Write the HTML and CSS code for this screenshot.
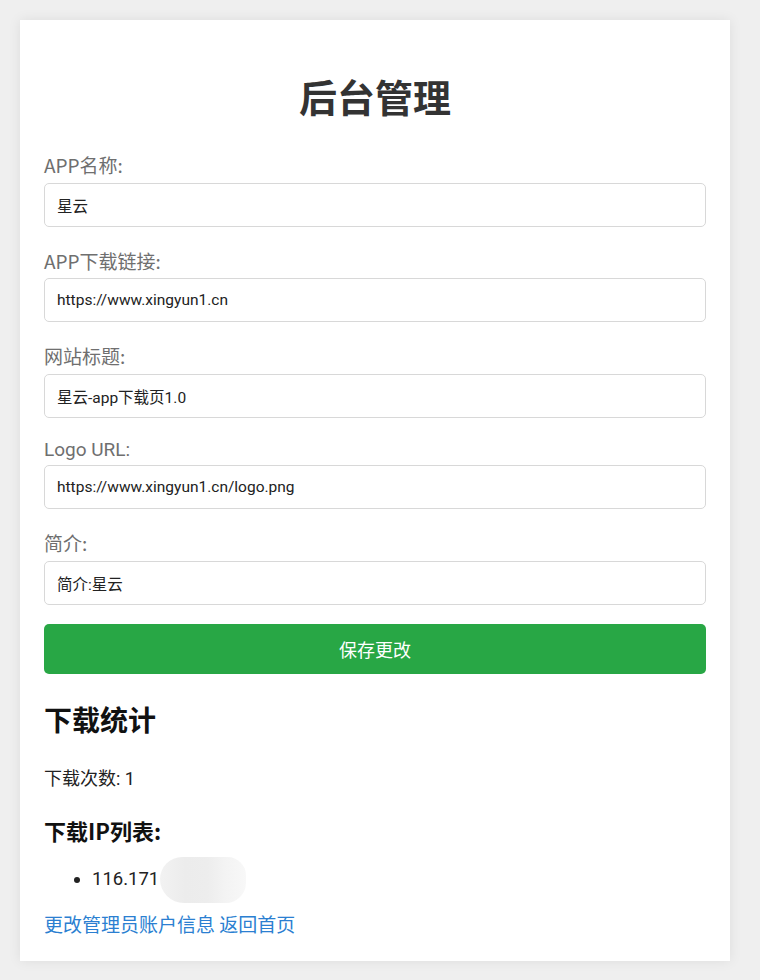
FILE: index.html
```html
<!DOCTYPE html>
<html lang="zh-CN">
<head>
<meta charset="utf-8">
<title>后台管理</title>
<link rel="stylesheet" href="styles.css">
</head>
<body>
<div class="card">
  <h1 class="title">后台管理</h1>
  <form class="form">
    <div class="group">
      <label class="label">APP名称:</label>
      <input class="input" type="text" value="星云">
    </div>
    <div class="group">
      <label class="label">APP下载链接:</label>
      <input class="input" type="text" value="https://www.xingyun1.cn">
    </div>
    <div class="group">
      <label class="label">网站标题:</label>
      <input class="input" type="text" value="星云-app下载页1.0">
    </div>
    <div class="group">
      <label class="label label-latin">Logo URL:</label>
      <input class="input" type="text" value="https://www.xingyun1.cn/logo.png">
    </div>
    <div class="group">
      <label class="label">简介:</label>
      <input class="input" type="text" value="简介:星云">
    </div>
    <button class="btn" type="button">保存更改</button>
  </form>
  <h2 class="stats-title">下载统计</h2>
  <p class="count">下载次数: 1</p>
  <h3 class="ip-title">下载IP列表:</h3>
  <ul class="ip-list">
    <li>116.171<span class="redact"></span></li>
  </ul>
  <p class="links"><a href="#">更改管理员账户信息</a> <a href="#">返回首页</a></p>
</div>
</body>
</html>
```

FILE: styles.css
```css
html, body {
  margin: 0;
  padding: 0;
}
body {
  background: #efefef;
  font-family: Roboto, "Noto Sans CJK SC", sans-serif;
  color: #333;
  padding: 20px;
}
.card {
  width: 710px;
  box-sizing: border-box;
  background: #fff;
  padding: 24px 24px 24px;
  box-shadow: 0 0 12px rgba(0, 0, 0, 0.08);
}
.title {
  font-family: "Noto Sans CJK SC", sans-serif;
  font-size: 38px;
  font-weight: 700;
  color: #333;
  text-align: center;
  margin: 24px 0 28px;
}
.form {
  margin: 0;
}
.group {
  margin-bottom: 20px;
}
.group:last-of-type {
  margin-bottom: 19px;
}
.label {
  display: block;
  font-family: "Noto Sans CJK SC", sans-serif;
  font-size: 19px;
  color: #6f6f6f;
  margin-bottom: 4.5px;
}
.label-latin {
  font-family: Roboto, "Noto Sans CJK SC", sans-serif;
}
.input {
  display: block;
  width: 100%;
  height: 44px;
  box-sizing: border-box;
  border: 1px solid #d8d8d8;
  border-radius: 5px;
  padding: 0 12px;
  font-family: Roboto, "Noto Sans CJK SC", sans-serif;
  font-size: 15.5px;
  color: #222;
  background: #fff;
  outline: none;
}
.btn {
  display: block;
  width: 100%;
  height: 50px;
  border: none;
  border-radius: 5px;
  background: #28a745;
  color: #fff;
  font-family: "Noto Sans CJK SC", sans-serif;
  font-size: 18px;
  cursor: pointer;
}
.stats-title {
  font-family: "Noto Sans CJK SC", sans-serif;
  font-size: 28px;
  font-weight: 700;
  color: #111;
  margin: 25px 0 25px;
}
.count {
  font-family: Roboto, "Noto Sans CJK SC", sans-serif;
  font-size: 18px;
  color: #222;
  margin: 0 0 24px;
}
.ip-title {
  font-family: "Noto Sans CJK SC", sans-serif;
  font-size: 22px;
  font-weight: 700;
  color: #111;
  margin: 0 0 20px;
}
.ip-list {
  margin: 0 0 18px;
  padding-left: 48px;
  font-size: 18.5px;
  color: #222;
}
.ip-list li {
  line-height: 26px;
}
.redact {
  display: inline-block;
  width: 86px;
  height: 46px;
  margin: -10px 0 -10px 1px;
  vertical-align: middle;
  border-radius: 24px 20px 22px 26px;
  background: linear-gradient(90deg, #f2f2f2 0%, #ececec 30%, #ededed 55%, #f3f3f3 75%, #f8f8f8 100%);
}
.links {
  margin: 0;
  font-family: "Noto Sans CJK SC", sans-serif;
  font-size: 19px;
  line-height: 26px;
}
.links a {
  color: #2b7fd1;
  text-decoration: none;
}
```
